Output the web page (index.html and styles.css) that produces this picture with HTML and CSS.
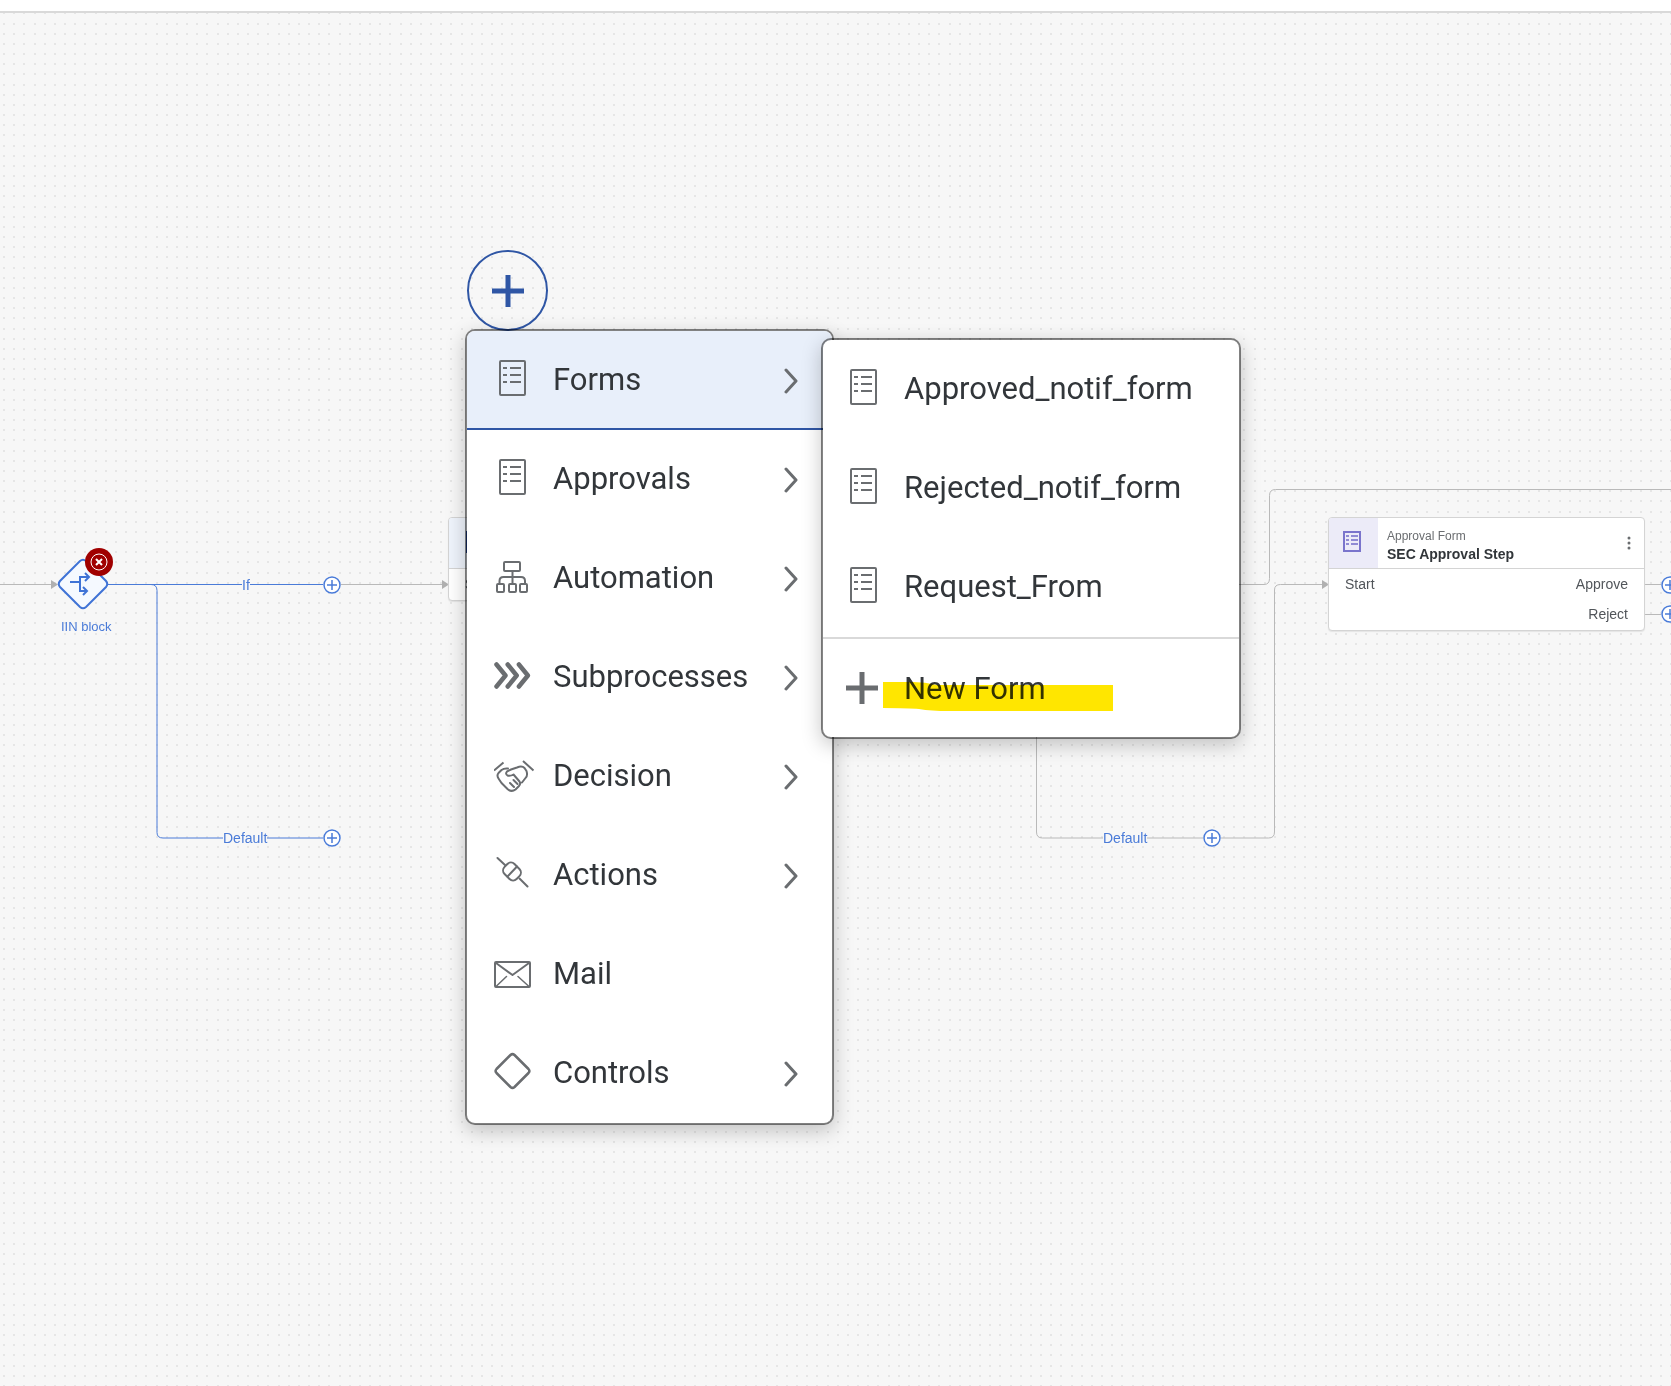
FILE: index.html
```html
<!DOCTYPE html>
<html lang="en">
<head>
<meta charset="utf-8">
<title>Process Builder</title>
<meta name="viewport" content="width=device-width, initial-scale=1">
<link rel="stylesheet" href="styles.css">
</head>
<body>
<svg class="defs" aria-hidden="true">
  <symbol id="i-form" viewBox="0 0 38 44">
    <rect x="6" y="3" width="25" height="34" rx="1"/>
    <path stroke-linecap="butt" d="M9 10h4M16 10h11M9 17h4M16 17h11M9 24h4M16 24h11"/>
  </symbol>
  <symbol id="i-tree" viewBox="0 0 38 44">
    <rect x="10" y="6" width="16" height="9" rx="1"/>
    <rect x="3" y="28" width="7" height="8" rx="1"/>
    <rect x="15" y="28" width="7" height="8" rx="1"/>
    <rect x="26" y="28" width="7" height="8" rx="1"/>
    <path d="M18.500 15v13M5.500 28v-3q0-4 4-4h17.500q4 0 4 4v3"/>
  </symbol>
  <symbol id="i-steps" viewBox="0 0 38 44">
    <path stroke-width="4.500" d="M2.500 9.500l9 11-9 11M13.700 9.500l9 11-9 11M24.900 9.500l9 11-9 11"/>
  </symbol>
  <symbol id="i-hands" viewBox="0 0 42 44">
    <path stroke-linecap="butt" d="M0 16.500l9.500-8M29 7l10.500 9.500"/>
    <path d="M14 14.500q-4-.5-6.500 1.500l-3 3q-2 2.500 0 5.500l3 4.500 6 6q4 3.500 8 .5l3.500-3.500q2-2 .5-4.500l-6-7q-3.500 2-6 1-2.500-1.500-.5-4l4-2 6-2q5-2 7.500.5l2 3q1.500 5-1 7l-3.500 4.500M16 29l4 4M19.500 26l4 4"/>
  </symbol>
  <symbol id="i-plug" viewBox="0 0 38 44">
    <path d="M3.500 5l7.500 7M25.500 25.500l8 8M13.500 23.500l9.500-10"/>
    <rect x="9.500" y="11.500" width="17" height="14" rx="5" transform="rotate(45 18 18.500)"/>
  </symbol>
  <symbol id="i-mail" viewBox="0 0 38 44">
    <rect x="1" y="10" width="35" height="25" rx="1"/>
    <path d="M2 11l16.500 12 16.500-12"/>
    <path stroke-width="1.500" d="M12.500 24.500l-10.500 10M24 24.500l11 10"/>
  </symbol>
  <symbol id="i-diamond" viewBox="0 0 38 44">
    <path stroke-width="2.500" d="M16.500 4q2-1.800 4 0l14 14q1.800 2 0 4l-14 14q-2 1.800-4 0l-14-14q-1.800-2 0-4z"/>
  </symbol>
  <symbol id="i-plus" viewBox="0 0 38 44">
    <path stroke-width="5" stroke-linecap="butt" d="M1 22h32M17 6v32"/>
  </symbol>
  <symbol id="i-chevron" viewBox="0 0 16 28">
    <path stroke-width="3" d="M2 4l10 11-10 11"/>
  </symbol>
  <symbol id="i-add" viewBox="0 0 18 18">
    <circle cx="9" cy="9" r="8"/>
    <path d="M4 9h10M9 4v10"/>
  </symbol>
</svg>

<header class="topbar"></header>
<main class="canvas">
  <svg class="layer" aria-hidden="true">
    <defs>
      <pattern id="dots" width="61" height="61" x="3" y="9" patternUnits="userSpaceOnUse">
        <path class="dot" d="M0 2h61M0 12h61M0 22h61M0 32h61M0 42h61M0 52h61" stroke-width="2" stroke-dasharray="2 8 2 8 2 9 2 8 2 8 2 8"/>
      </pattern>
    </defs>
    <rect width="100%" height="100%" fill="url(#dots)"/>
  </svg>
  <svg class="layer" aria-hidden="true">
    <g class="edge">
      <path d="M0 571.500h52M340 571.500h103M1150 571.500h114q5.500 0 5.500-6v-83q0-6 6-6h2000M1036.500 600v219q0 6 6 6h226q6 0 6-6v-242q0-5.500 6-5.500h42M1645 571.500h16M1645 601.500h16"/>
    </g>
    <path class="tip" d="M51 567l7 4.500-7 4.500zM442 567l7 4.500-7 4.500zM1322 567l7 4.500-7 4.500z"/>
    <path class="edge edge-on" d="M108 571.500h216M151 571.500q6 0 6 6v242q0 5.500 6 5.500h161"/>
  </svg>

  <section class="gate">
    <svg class="gate-shape" viewBox="0 0 52 52" aria-hidden="true">
      <path class="gate-box" d="M23 3q3-2.500 6 0l20 20q2.500 3 0 6l-20 20q-3 2.500-6 0l-20-20q-2.500-3 0-6z"/>
      <path d="M13 24h10M32 19h-9v14h7M28 15l4 4-4 4M26 29l4 4-4 4"/>
    </svg>
    <svg class="gate-error" viewBox="0 0 28 28" role="img" aria-label="Error">
      <circle cx="14" cy="14" r="14" fill="#a00000"/>
      <circle cx="14" cy="14" r="8"/>
      <path stroke-width="2" d="M11 11l6 6M17 11l-6 6"/>
    </svg>
    <span class="gate-name">IIN block</span>
  </section>

  <span class="label label-if">If</span>
  <span class="label label-default">Default</span>
  <span class="label label-default-2">Default</span>
  <button class="add add-if" aria-label="Add step"><svg><use href="#i-add"/></svg></button>
  <button class="add add-default" aria-label="Add step"><svg><use href="#i-add"/></svg></button>
  <button class="add add-default-2" aria-label="Add step"><svg><use href="#i-add"/></svg></button>

  <article class="card card-form">
    <div class="card-head"><span class="card-icon"><svg viewBox="0 0 20 22" aria-hidden="true"><rect width="20" height="22"/></svg></span></div>
    <div class="ports"><span>Start</span></div>
  </article>

  <article class="card card-approval">
    <div class="card-head">
      <span class="card-icon"><svg viewBox="0 0 20 22" aria-hidden="true"><rect x="2" y="1" width="16" height="19" fill="none" stroke-width="2"/><path d="M4 5h3M9 5h7M4 9h3M9 9h7M4 13h3M9 13h7" stroke-width="2" opacity=".8"/></svg></span>
      <div class="card-title"><p>Approval Form</p><h2>SEC Approval Step</h2></div>
      <button class="more" aria-label="More"><svg viewBox="0 0 4 16"><circle cx="2" cy="3" r="1.500"/><circle cx="2" cy="8" r="1.500"/><circle cx="2" cy="13" r="1.500"/></svg></button>
    </div>
    <div class="ports"><span>Start</span><div class="outs"><span>Approve</span><span>Reject</span></div></div>
  </article>
  <button class="add add-approve" aria-label="Add step"><svg><use href="#i-add"/></svg></button>
  <button class="add add-reject" aria-label="Add step"><svg><use href="#i-add"/></svg></button>

  <button class="insert" aria-label="Insert"><svg viewBox="0 0 32 32"><path d="M0 16h32M16 0v32"/></svg></button>

  <div class="menu menu-main" role="menu">
    <button class="item item-open" role="menuitem"><svg class="icon"><use href="#i-form"/></svg><span>Forms</span><svg class="chevron"><use href="#i-chevron"/></svg></button>
    <button class="item" role="menuitem"><svg class="icon"><use href="#i-form"/></svg><span>Approvals</span><svg class="chevron"><use href="#i-chevron"/></svg></button>
    <button class="item" role="menuitem"><svg class="icon"><use href="#i-tree"/></svg><span>Automation</span><svg class="chevron"><use href="#i-chevron"/></svg></button>
    <button class="item" role="menuitem"><svg class="icon"><use href="#i-steps"/></svg><span>Subprocesses</span><svg class="chevron"><use href="#i-chevron"/></svg></button>
    <button class="item" role="menuitem"><svg class="icon icon-wide"><use href="#i-hands"/></svg><span>Decision</span><svg class="chevron"><use href="#i-chevron"/></svg></button>
    <button class="item" role="menuitem"><svg class="icon"><use href="#i-plug"/></svg><span>Actions</span><svg class="chevron"><use href="#i-chevron"/></svg></button>
    <button class="item" role="menuitem"><svg class="icon"><use href="#i-mail"/></svg><span>Mail</span></button>
    <button class="item" role="menuitem"><svg class="icon"><use href="#i-diamond"/></svg><span>Controls</span><svg class="chevron"><use href="#i-chevron"/></svg></button>
  </div>

  <div class="menu menu-forms" role="menu">
    <button class="item" role="menuitem"><svg class="icon"><use href="#i-form"/></svg><span>Approved_notif_form</span></button>
    <button class="item" role="menuitem"><svg class="icon"><use href="#i-form"/></svg><span>Rejected_notif_form</span></button>
    <button class="item" role="menuitem"><svg class="icon"><use href="#i-form"/></svg><span>Request_From</span></button>
    <button class="item item-new" role="menuitem"><svg class="icon"><use href="#i-plus"/></svg><span>New Form</span>
      <svg class="marker" viewBox="0 0 230 32" aria-hidden="true"><path d="M0 1h30q12 0 24 3h176v26H66q-18 0-30-2-10-1-36-1z"/></svg>
    </button>
  </div>
</main>
</body>
</html>
```

FILE: styles.css
```css
* { box-sizing: border-box; }

body {
  margin: 0;
  min-height: 100vh;
  display: flex;
  flex-direction: column;
  overflow: hidden;
  background: #f7f7f7;
  font-family: "Liberation Sans", Arial, sans-serif;
  font-size: 14px;
}

button {
  padding: 0;
  border: 0;
  background: none;
  font: inherit;
  color: inherit;
  text-align: left;
  cursor: pointer;
}

svg { display: block; }
p, h2 { margin: 0; }

.defs { position: absolute; width: 0; height: 0; }

.topbar {
  height: 13px;
  background: #fff;
  border-bottom: 2px solid #d9d9d9;
}

.canvas {
  position: relative;
  flex: 1;
  overflow: hidden;
}

.layer { position: absolute; inset: 0; width: 100%; height: 100%; }
.dot { stroke: #e6e6e6; }
.edge { fill: none; stroke: #b9b9b9; stroke-width: 1; }
.edge-on { stroke: #4a7bd8; }
.tip { fill: #b0b0b0; }

/* Condition gateway */
.gate { position: absolute; left: 57px; top: 545px; }
.gate-shape {
  width: 52px;
  height: 52px;
  fill: none;
  stroke: #3f73d6;
  stroke-width: 2;
}
.gate-box { fill: #f5f9ff; }
.gate-error {
  position: absolute;
  left: 28px;
  top: -10px;
  width: 28px;
  height: 28px;
  fill: none;
  stroke: #fff;
}
.gate-error circle:first-child { stroke: none; }
.gate-name {
  position: absolute;
  left: 4px;
  top: 61px;
  font-size: 13px;
  line-height: 16px;
  white-space: nowrap;
  color: #4a7bd8;
}

.label {
  position: absolute;
  line-height: 16px;
  background: #f7f7f7;
  color: #4a7bd8;
}
.label-if { left: 242px; top: 564px; }
.label-default { left: 223px; top: 817px; }
.label-default-2 { left: 1103px; top: 817px; }

.add {
  position: absolute;
  width: 18px;
  height: 18px;
  border-radius: 50%;
  background: #fff;
}
.add svg { width: 18px; height: 18px; fill: none; stroke: #4a7bd8; stroke-width: 1.5; }
.add-if { left: 323px; top: 563px; }
.add-default { left: 323px; top: 816px; }
.add-default-2 { left: 1203px; top: 816px; }
.add-approve { left: 1661px; top: 563px; }
.add-reject { left: 1661px; top: 592px; }

/* Step cards */
.card {
  position: absolute;
  top: 504px;
  width: 317px;
  border: 1px solid #d4d4d4;
  border-radius: 4px;
  background: #fff;
  box-shadow: 0 1px 1px #e4e4e4;
}
.card-form { left: 448px; }
.card-approval { left: 1328px; }
.card-head {
  display: flex;
  height: 51px;
  border-bottom: 1px solid #d4d4d4;
}
.card-icon {
  width: 49px;
  padding: 13px;
  border-radius: 3px 0 0 0;
  background: #ecebf8;
}
.card-icon svg { width: 20px; height: 22px; stroke: #7a74cc; }
.card-form .card-icon { padding-left: 17px; background: #eff4fc; }
.card-form .card-icon svg { fill: #1d3f8f; stroke: none; }
.card-title { flex: 1; padding: 9px; }
.card-title p { font-size: 12px; line-height: 18px; color: #6a6d70; }
.card-title h2 { font-size: 14px; line-height: 18px; font-weight: bold; color: #32363a; }
.more { width: 30px; padding: 0 13px; }
.more svg { width: 4px; height: 16px; fill: #6a6d70; }
.ports {
  display: flex;
  justify-content: space-between;
  padding: 0 16px 1px;
  line-height: 30px;
  color: #51555a;
}
.outs { display: flex; flex-direction: column; text-align: right; }

.insert {
  position: absolute;
  left: 467px;
  top: 237px;
  display: flex;
  align-items: center;
  justify-content: center;
  width: 81px;
  height: 81px;
  border: 2px solid #2f56a5;
  border-radius: 50%;
}
.insert svg { width: 32px; height: 32px; stroke: #2f56a5; stroke-width: 5; }

/* Pop-up menus */
.menu {
  position: absolute;
  border: 2px solid rgba(0, 0, 0, .48);
  border-radius: 10px;
  background: #fff;
  background-clip: padding-box;
  box-shadow: 0 6px 20px rgba(0, 0, 0, .22);
  font-family: Roboto, "Noto Sans", sans-serif;
  font-size: 31px;
  color: #32363a;
  overflow: hidden;
}
.menu-main { left: 465px; top: 316px; width: 369px; }
.menu-forms { left: 821px; top: 325px; width: 420px; }

.item {
  position: relative;
  display: flex;
  align-items: center;
  width: 100%;
  height: 99px;
  padding: 0 32px 0 27px;
  border-bottom: 2px solid transparent;
}
.item span { flex: 1; margin-left: 21px; }
.item-open { background: #e8effa; border-bottom-color: #2f56a5; }
.menu-forms .item { padding: 0 22px; }
.menu-forms .item-new {
  height: 100px;
  border-top: 2px solid #d9d9d9;
  border-bottom: 0;
}

.icon, .chevron {
  fill: none;
  stroke: #6a6d70;
  stroke-width: 2;
  stroke-linecap: round;
  stroke-linejoin: round;
}
.icon { width: 38px; height: 44px; }
.icon-wide { width: 42px; }
.icon-wide + span { margin-left: 17px; }
.chevron { width: 16px; height: 28px; }
.marker {
  position: absolute;
  left: 60px;
  top: 42px;
  width: 230px;
  height: 32px;
  fill: #ffe600;
  mix-blend-mode: multiply;
}
```
